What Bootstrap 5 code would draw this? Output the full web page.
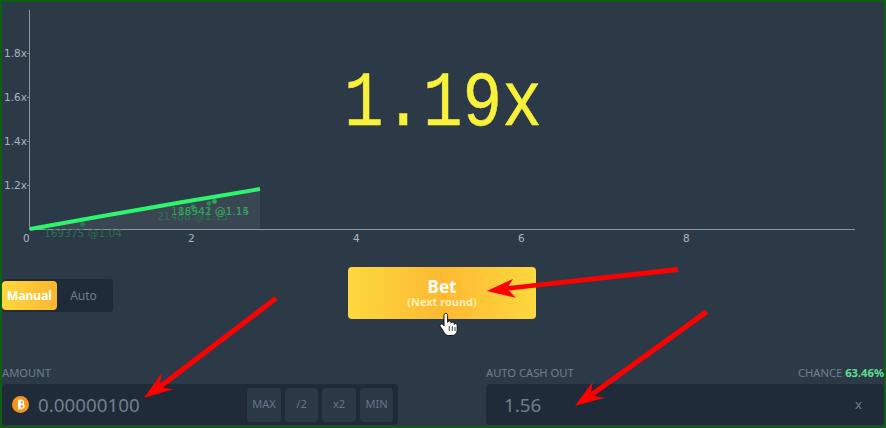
<!DOCTYPE html>
<html lang="en">
<head>
<meta charset="utf-8">
<title>Bet</title>
<link href="https://cdn.jsdelivr.net/npm/bootstrap@5.3.0/dist/css/bootstrap.min.css" rel="stylesheet">
<style>
html,body{margin:0;height:100%;background:#2c3a47}
body{font-family:"Noto Sans",sans-serif;color:#6f7f8e;overflow:hidden}
.game-frame{width:886px;height:428px;border:2px solid #0d5e14;background:#2c3a47;position:relative}
.chart-svg{display:block;width:882px;height:260px}
.tick-label{font-family:"DejaVu Sans",sans-serif;font-size:10.5px;fill:#a9b5c1}
.bet-label{font-family:"DejaVu Sans",sans-serif;font-size:10.6px;fill:#35a35f;opacity:.85}
.bet-label-dim{fill:#2b7a50;opacity:.8}
.multiplier{font-family:"Liberation Mono",monospace;font-size:78px;fill:#f8f03a;stroke:#f8f03a;stroke-width:.5px}
.action-row{height:102px;padding-top:5px}
.mode-slot{width:346px;padding-top:12px}
.mode-toggle{width:111px;height:33px;background:#1f2b38;border-radius:4px;padding:2px 0}
.mode-on,.mode-off{border:0;padding:0;font-size:12px;line-height:29px;height:29px;border-radius:4px}
.mode-on{width:55px;color:#fff;font-weight:700;background:linear-gradient(90deg,#fdd83e,#ffb62f)}
.mode-off{width:53px;color:#6f7f8e;background:transparent}
.bet-btn{width:188px;height:52px;border:0;border-radius:4px;padding:0;color:#fff;background:linear-gradient(90deg,#fdd83e,#feb933 50%,#fdd83e)}
.bet-main{font-size:17px;font-weight:700;line-height:17px}
.bet-sub{font-size:11px;font-weight:700;line-height:13px;color:#ffeeb5}
.field-wrap{height:61px}
.field-left{width:396px}
.field-gap{width:88px}
.field-right{width:398px}
.field-label{font-size:11.2px;line-height:18px;height:20px;color:#6f7f8e}
.chance-value{color:#5fe08f;font-weight:700}
.field-box{height:41px;background:#1f2b38;border-radius:4px}
.coin-svg{width:17px;height:17px;margin-left:10px;margin-right:9px;flex:none}
.amount-value{font-size:18.8px;color:#6f7f8e;line-height:41px;padding-top:1px}
.cashout-value{font-size:18.8px;color:#6f7f8e;line-height:41px;padding-left:18px;padding-top:1px}
.mini-btns{gap:4px;padding-right:5px}
.mini-btn{height:34px;border:0;border-radius:4px;padding:0;background:#2b3947;color:#66768a;font-size:11px}
.mini-w34{width:34px}
.mini-w33{width:33px}
.suffix-x{font-size:13px;padding-right:22px}
.overlay-svg{position:absolute;left:-2px;top:-2px;width:886px;height:428px;pointer-events:none}
</style>
</head>
<body>
<div class="game-frame">
  <svg class="chart-svg" viewBox="2 2 882 260" xmlns="http://www.w3.org/2000/svg">
    <polygon points="30,229 260,190 260,229" fill="#3a4651"/>
    <line x1="29.5" y1="10" x2="29.5" y2="230" stroke="#8b97a3"/>
    <line x1="29" y1="229.5" x2="855" y2="229.5" stroke="#8b97a3"/>
    <g stroke="#8b97a3">
      <line x1="27" y1="53.5" x2="30" y2="53.5"/>
      <line x1="27" y1="97.5" x2="30" y2="97.5"/>
      <line x1="27" y1="141.5" x2="30" y2="141.5"/>
      <line x1="27" y1="185.5" x2="30" y2="185.5"/>
    </g>
    <text class="tick-label" x="4" y="57">1.8x</text>
    <text class="tick-label" x="4" y="101">1.6x</text>
    <text class="tick-label" x="4" y="145">1.4x</text>
    <text class="tick-label" x="4" y="189">1.2x</text>
    <text class="tick-label" x="23" y="242">0</text>
    <text class="tick-label" x="188" y="242">2</text>
    <text class="tick-label" x="353" y="242">4</text>
    <text class="tick-label" x="518" y="242">6</text>
    <text class="tick-label" x="683" y="242">8</text>
    <circle cx="82.500" cy="224.500" r="2.400" fill="#2b7a50"/>
    <circle cx="209" cy="203.500" r="2.400" fill="#2b8a58"/>
    <circle cx="214.500" cy="201.500" r="2.400" fill="#35a35f"/>
    <circle cx="193" cy="207" r="2.400" fill="#2b8a58"/>
    <text class="bet-label bet-label-dim" x="44" y="237">169375 @1.04</text>
    <text class="bet-label bet-label-dim" x="157" y="220">21488 @1.13</text>
    <text class="bet-label" x="171" y="215">188942 @1.14</text>
    <text class="bet-label" x="178" y="215">16541 @1.15</text>
    <polyline points="30,229 100,216.500 180,202.500 260,189" fill="none" stroke="#2df56d" stroke-width="4"/>
    <text class="multiplier" transform="translate(344 125) scale(.845 1)">1.19x</text>
  </svg>

  <div class="action-row d-flex">
    <div class="mode-slot">
      <div class="mode-toggle d-flex">
        <button type="button" class="mode-on">Manual</button>
        <button type="button" class="mode-off">Auto</button>
      </div>
    </div>
    <button type="button" class="bet-btn d-flex flex-column align-items-center justify-content-center">
      <span class="bet-main">Bet</span>
      <span class="bet-sub">(Next round)</span>
    </button>
  </div>

  <div class="field-wrap d-flex">
    <div class="field-left">
      <div class="field-label">AMOUNT</div>
      <div class="field-box d-flex align-items-center justify-content-between">
        <div class="d-flex align-items-center">
          <svg class="coin-svg" viewBox="0 0 17 17" xmlns="http://www.w3.org/2000/svg">
            <circle cx="8.500" cy="8.500" r="8.500" fill="#f7931a"/>
            <path d="M6.600 4.600h3c1.300 0 2 .7 2 1.800 0 1-.7 1.700-1.800 1.800 1.300.1 2.200.9 2.200 2 0 1.200-.9 2-2.400 2H6.600zM8 4.600V12.200M7.200 3.300v1.300M9.200 3.300v1.300M7.200 12.200v1.400M9.200 12.200v1.400M6.800 8.200h3" fill="none" stroke="#fff" stroke-width="1.400"/>
          </svg>
          <span class="amount-value">0.00000100</span>
        </div>
        <div class="mini-btns d-flex">
          <button type="button" class="mini-btn mini-w34">MAX</button>
          <button type="button" class="mini-btn mini-w33">/2</button>
          <button type="button" class="mini-btn mini-w34">x2</button>
          <button type="button" class="mini-btn mini-w33">MIN</button>
        </div>
      </div>
    </div>
    <div class="field-gap"></div>
    <div class="field-right">
      <div class="field-label d-flex justify-content-between">
        <span>AUTO CASH OUT</span>
        <span>CHANCE <span class="chance-value">63.46%</span></span>
      </div>
      <div class="field-box d-flex align-items-center justify-content-between">
        <span class="cashout-value">1.56</span>
        <span class="suffix-x">x</span>
      </div>
    </div>
  </div>

  <svg class="overlay-svg" viewBox="0 0 886 428" xmlns="http://www.w3.org/2000/svg">
    <g fill="#fe0000">
      <polygon points="144,397.700 161.700,373.300 160,383.500 274.500,296.300 277.500,300.300 163,387.500 173.300,389.300"/>
      <polygon points="486.700,291 513,279 508.500,286 677.700,267 678.300,272 509,290.500 515.700,297.700"/>
      <polygon points="575,405.700 592.700,381.700 591,392 705,309.700 708.300,313.700 594,396 605,397.700"/>
    </g>
    <path d="M444 315.500c0-2.800 3.600-2.800 3.600 0v6.800c.4-1.700 3.100-1.700 3.400 0v.9c.4-1.500 3-1.500 3.200.3v.9c.5-1.300 2.800-1.100 3 .6v5c0 3.200-1.900 5.500-5 5.500h-3.500c-2.200 0-3.400-1-4.500-2.800l-3.900-6.200c-1.100-1.900 1.400-3.500 2.900-1.700l.8 1z" fill="#fff" stroke="#111" stroke-width="1"/>
    <path d="M449.300 326v5M452.300 326v5M455 327v4" stroke="#111" stroke-width=".8" fill="none"/>
  </svg>
</div>
<script src="https://cdn.jsdelivr.net/npm/bootstrap@5.3.0/dist/js/bootstrap.bundle.min.js"></script>
</body>
</html>
